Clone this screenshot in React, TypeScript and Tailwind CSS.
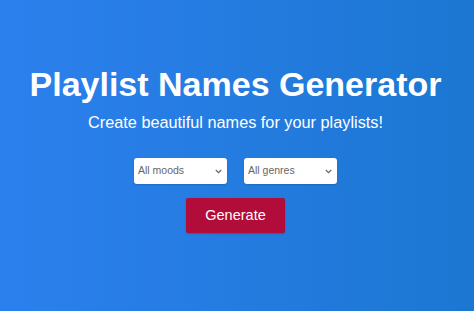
import React from "react";

function Chevron() {
  return (
    <svg width="7" height="5" viewBox="0 0 7 5" className="shrink-0">
      <path d="M0.8 1 L3.5 3.7 L6.2 1" fill="none" stroke="#666" strokeWidth="1.2" />
    </svg>
  );
}

function Select({ label }: { label: string }) {
  return (
    <div className="flex h-[26px] w-[93px] items-center justify-between rounded-[3px] bg-white pl-[4px] pr-[5px] shadow-[0_1px_2px_rgba(0,0,0,0.15)]">
      <span className="text-[10.5px] text-[#666]">{label}</span>
      <Chevron />
    </div>
  );
}

export default function App() {
  return (
    <div
      className="flex h-[311px] w-[474px] flex-col items-center bg-gradient-to-r from-[#2c80ee] to-[#1b77d2] pr-[3px] text-white"
      style={{ fontFamily: '"Liberation Sans", Arial, sans-serif' }}
    >
      <h1 className="mt-[64px] text-[34px] font-bold leading-[40px]">Playlist Names Generator</h1>
      <p className="mt-[8px] text-[16.3px] leading-[20px]">Create beautiful names for your playlists!</p>
      <div className="mt-[26px] flex gap-[17px]">
        <Select label="All moods" />
        <Select label="All genres" />
      </div>
      <button className="mt-[14px] h-[35px] w-[99px] rounded-[2px] bg-[#b20c3a] text-[14.5px] text-white shadow-[0_1px_2px_rgba(0,0,0,0.2)]">
        Generate
      </button>
    </div>
  );
}
